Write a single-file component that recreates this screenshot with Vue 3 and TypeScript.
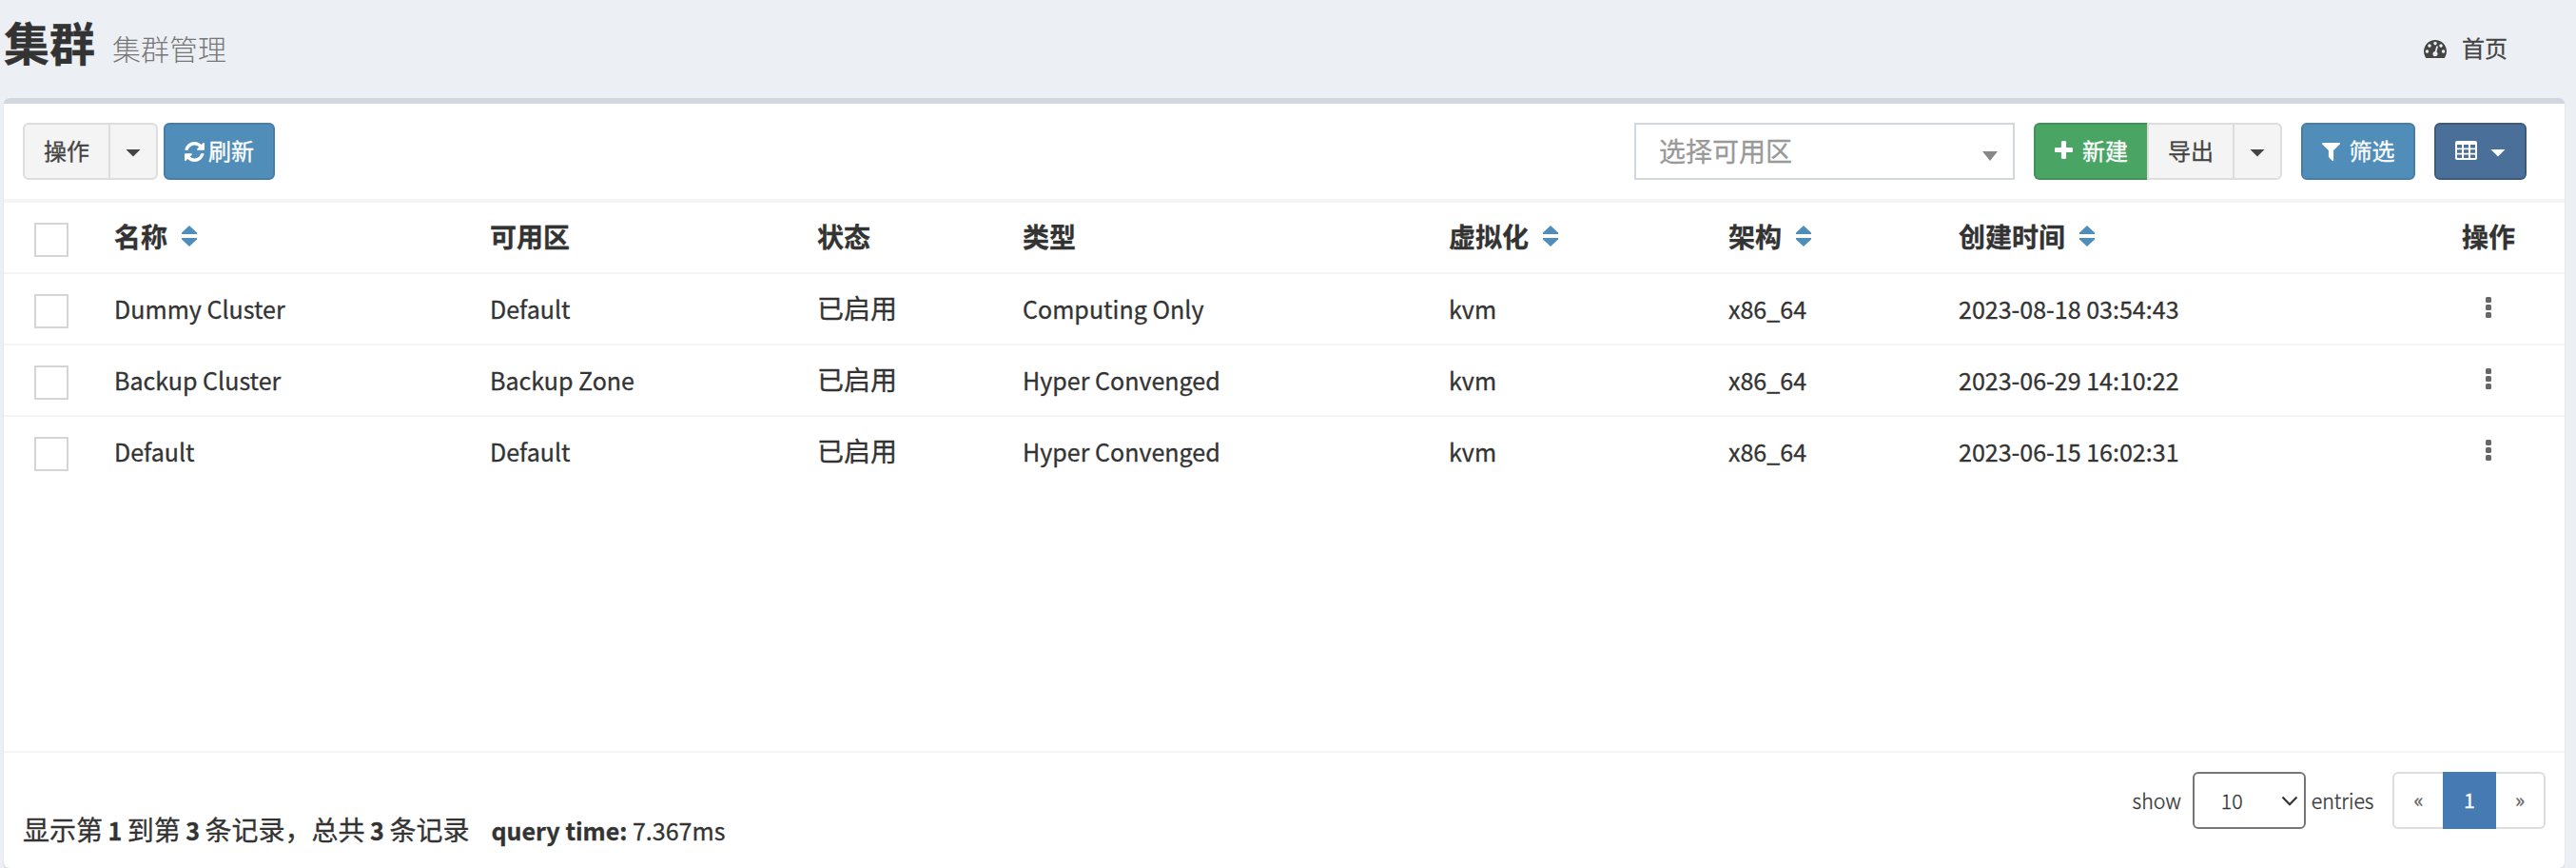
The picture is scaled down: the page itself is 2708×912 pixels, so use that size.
<script setup lang="ts">
interface Column {
  label: string
  sortable: boolean
}

interface Cluster {
  name: string
  zone: string
  status: string
  kind: string
  virt: string
  arch: string
  created: string
}

const columns: Column[] = [
  { label: '名称', sortable: true },
  { label: '可用区', sortable: false },
  { label: '状态', sortable: false },
  { label: '类型', sortable: false },
  { label: '虚拟化', sortable: true },
  { label: '架构', sortable: true },
  { label: '创建时间', sortable: true },
  { label: '操作', sortable: false },
]

const clusters: Cluster[] = [
  { name: 'Dummy Cluster', zone: 'Default', status: '已启用', kind: 'Computing Only', virt: 'kvm', arch: 'x86_64', created: '2023-08-18 03:54:43' },
  { name: 'Backup Cluster', zone: 'Backup Zone', status: '已启用', kind: 'Hyper Convenged', virt: 'kvm', arch: 'x86_64', created: '2023-06-29 14:10:22' },
  { name: 'Default', zone: 'Default', status: '已启用', kind: 'Hyper Convenged', virt: 'kvm', arch: 'x86_64', created: '2023-06-15 16:02:31' },
]
</script>

<template>
  <div class="page">
    <header class="content-header">
      <h1>集群</h1>
      <small class="subtitle">集群管理</small>
      <nav class="crumb">
        <svg class="dash" viewBox="0 256 1792 1408"><path d="M384 1152q0-53-37.5-90.5t-90.5-37.5-90.5 37.5-37.5 90.5 37.5 90.5 90.5 37.5 90.5-37.5 37.5-90.5zm192-448q0-53-37.5-90.5t-90.5-37.5-90.5 37.5-37.5 90.5 37.5 90.5 90.5 37.5 90.5-37.5 37.5-90.5zm428 481l101-382q6-26-7.5-48.5t-38.5-29.5-48 6.5-30 39.5l-101 382q-60 5-107 43.5t-63 98.5q-20 77 20 146t117 89 146-20 89-117q16-60-6-117t-72-91zm660-33q0-53-37.5-90.5t-90.5-37.5-90.5 37.5-37.5 90.5 37.5 90.5 90.5 37.5 90.5-37.5 37.5-90.5zm-640-640q0-53-37.5-90.5t-90.5-37.5-90.5 37.5-37.5 90.5 37.5 90.5 90.5 37.5 90.5-37.5 37.5-90.5zm448 192q0-53-37.5-90.5t-90.5-37.5-90.5 37.5-37.5 90.5 37.5 90.5 90.5 37.5 90.5-37.5 37.5-90.5zm320 448q0 261-141 483-19 29-54 29h-1402q-35 0-54-29-141-221-141-483 0-182 71-348t191-286 286-191 348-71 348 71 286 191 191 286 71 348z" /></svg>
        <span>首页</span>
      </nav>
    </header>

    <main class="box">
      <div class="toolbar">
        <div class="group">
          <button class="btn gray first w-action"><span>操作</span></button>
          <button class="btn gray last w-caret"><i class="caret"></i></button>
        </div>
        <button class="btn blue refresh">
          <svg class="ic-refresh" viewBox="0 0 1536 1536"><path d="M1511 928q0 5-1 7-64 268-268 434.5t-478 166.5q-146 0-282.5-55t-243.5-157l-129 129q-19 19-45 19t-45-19-19-45v-448q0-26 19-45t45-19h448q26 0 45 19t19 45-19 45l-137 137q71 66 161 102t187 36q134 0 250-65t186-179q11-17 53-117 8-23 30-23h192q13 0 22.5 9.5t9.5 22.5zm25-800v448q0 26-19 45t-45 19h-448q-26 0-45-19t-19-45 19-45l138-138q-148-137-349-137-134 0-250 65t-186 179q-11 17-53 117-8 23-30 23h-199q-13 0-22.5-9.5t-9.5-22.5v-7q65-268 270-434.5t480-166.5q146 0 284 55.5t245 156.5l130-129q19-19 45-19t45 19 19 45z" /></svg>
          <span>刷新</span>
        </button>

        <div class="zone-select">
          <span>选择可用区</span>
          <i class="caret zone-caret"></i>
        </div>
        <div class="group create-group">
          <button class="btn green first w-create">
            <svg class="ic-plus" viewBox="0 -192 1408 1408"><path d="M1408 416v192q0 40-28 68t-68 28h-416v416q0 40-28 68t-68 28h-192q-40 0-68-28t-28-68v-416h-416q-40 0-68-28t-28-68v-192q0-40 28-68t68-28h416v-416q0-40 28-68t68-28h192q40 0 68 28t28 68v416h416q40 0 68 28t28 68z" /></svg>
            <span>新建</span>
          </button>
          <button class="btn gray mid w-export"><span>导出</span></button>
          <button class="btn gray last w-caret">
            <i class="caret"></i>
          </button>
        </div>
        <button class="btn blue filter">
          <svg class="ic-filter" viewBox="0 0 1408 1408"><path d="M1403 39q17 41-14 70l-493 493v742q0 42-39 59-13 5-25 5-27 0-45-19l-256-256q-19-19-19-45v-486l-493-493q-31-29-14-70 17-39 59-39h1280q42 0 59 39z" /></svg>
          <span>筛选</span>
        </button>
        <button class="btn navy columns">
          <svg class="ic-grid" viewBox="0 0 23 20"><path fill-rule="evenodd" d="M2 0h19a2 2 0 0 1 2 2v16a2 2 0 0 1-2 2H2a2 2 0 0 1-2-2V2a2 2 0 0 1 2-2zM2 4v3.5h5V4zM9 4v3.5h5V4zM16 4v3.5h5V4zM2 9.2v3.5h5V9.200zM9 9.2v3.5h5V9.200zM16 9.2v3.5h5V9.200zM2 14.400v3.600h5v-3.600zM9 14.400v3.600h5v-3.600zM16 14.400v3.600h5v-3.600z" /></svg>
          <i class="caret"></i>
        </button>
      </div>

      <div class="table-wrap">
        <table>
          <colgroup>
            <col class="c-check" /><col class="c-name" /><col class="c-zone" /><col class="c-status" />
            <col class="c-kind" /><col class="c-virt" /><col class="c-arch" /><col class="c-time" /><col class="c-ops" />
          </colgroup>
          <thead>
            <tr>
              <th class="check"><i class="checkbox"></i></th>
              <th v-for="col in columns" :key="col.label">
                <span class="head">
                  {{ col.label }}
                  <svg v-if="col.sortable" class="sort" viewBox="0 0 16 22"><path d="M8 0 16 7.600V9H0V7.600zM0 13h16v1.400L8 22 0 14.400z" /></svg>
                </span>
              </th>
            </tr>
          </thead>
          <tbody>
            <tr v-for="row in clusters" :key="row.name">
              <td class="check"><i class="checkbox"></i></td>
              <td><span class="lat">{{ row.name }}</span></td>
              <td><span class="lat">{{ row.zone }}</span></td>
              <td>{{ row.status }}</td>
              <td><span class="lat">{{ row.kind }}</span></td>
              <td><span class="lat">{{ row.virt }}</span></td>
              <td><span class="lat">{{ row.arch }}</span></td>
              <td><span class="lat">{{ row.created }}</span></td>
              <td class="ops">
                <svg class="dots" viewBox="0 0 6 22"><rect width="6" height="6" rx="1.5" /><rect y="8" width="6" height="6" rx="1.5" /><rect y="16" width="6" height="6" rx="1.5" /></svg>
              </td>
            </tr>
          </tbody>
        </table>
      </div>

      <footer class="foot">
        <p class="summary">显示第<b>1</b>到第<b>3</b>条记录，总共<b>3</b>条记录<b class="query">query time:</b><span class="lat">7.367ms</span></p>
        <div class="pager">
          <span class="word">show</span>
          <div class="size-select">
            <span>10</span>
            <svg class="chev" viewBox="0 0 18 11"><path d="M1.5 1.5 9 9.2l7.5-7.7" /></svg>
          </div>
          <span class="word">entries</span>
          <div class="pages">
            <a class="prev">«</a><a class="current">1</a><a class="next">»</a>
          </div>
        </div>
      </footer>
    </main>
  </div>
</template>

<style>
body {
  margin: 0;
  background: #ecf0f5;
}
</style>

<style scoped>
* {
  box-sizing: border-box;
}
.page {
  height: 912px;
  padding: 0 12px 0 4px;
  overflow: hidden;
  background: #ecf0f5;
  color: #333;
  font-family: "Noto Sans CJK SC", "Open Sans", sans-serif;
  font-size: 28px;
  -webkit-text-stroke: 0.3px currentColor;
}
.content-header {
  display: flex;
  align-items: flex-start;
  height: 103px;
}
h1 {
  margin: 8px 0 0;
  font-size: 48px;
  line-height: 70px;
  font-weight: 700;
}
.subtitle {
  margin: 28px 0 0 18px;
  font-size: 30px;
  line-height: 44px;
  font-weight: 300;
  color: #777;
  -webkit-text-stroke: 0;
}
.crumb {
  display: flex;
  align-items: center;
  gap: 16px;
  height: 36px;
  margin: 32px 60px 0 auto;
  font-size: 24px;
  line-height: 36px;
  color: #444;
}
.dash {
  width: 24px;
  height: 19px;
  margin-top: 2px;
  fill: #444;
}
.box {
  display: flex;
  flex-direction: column;
  height: 809px;
  border-top: 6px solid #d2d6de;
  border-radius: 6px;
  background: #fff;
  box-shadow: 0 2px 2px rgba(0, 0, 0, 0.1);
}
.toolbar {
  display: flex;
  height: 104px;
  padding: 20px 40px 20px 20px;
  border-bottom: 4px solid #f4f4f4;
}
.group {
  display: flex;
}
.btn {
  display: flex;
  align-items: center;
  justify-content: center;
  height: 60px;
  padding: 0;
  border: 2px solid;
  border-radius: 6px;
  font-family: inherit;
  font-size: 24px;
  line-height: 36px;
}
.btn span {
  display: block;
  margin-top: -3px;
}
.btn svg {
  fill: #fff;
}
.gray {
  background: #f4f4f4;
  border-color: #ddd;
  color: #444;
}
.blue {
  background: #508db9;
  border-color: #487ea6;
  color: #fff;
}
.green {
  background: #4aa564;
  border-color: #43915a;
  color: #fff;
}
.navy {
  background: #4a7099;
  border-color: #3b5a7c;
  color: #fff;
}
.first {
  border-top-right-radius: 0;
  border-bottom-right-radius: 0;
}
.mid {
  border-radius: 0;
}
.last {
  margin-left: -2px;
  border-top-left-radius: 0;
  border-bottom-left-radius: 0;
}
.w-action {
  width: 92px;
}
.w-caret {
  width: 52px;
}
.w-create {
  width: 119px;
  gap: 10px;
  border-right: 0;
}
.w-export {
  width: 92px;
}
.caret {
  width: 16px;
  height: 8px;
  margin-top: 3px;
  background: currentColor;
  clip-path: polygon(0 0, 100% 0, 50% 100%);
}
.refresh {
  width: 117px;
  margin-left: 6px;
  gap: 4px;
}
.ic-refresh {
  width: 21px;
  height: 21px;
}
.ic-plus {
  width: 19px;
  height: 19px;
  margin-top: -3px;
}
.ic-filter {
  width: 19px;
  height: 19px;
}
.ic-grid {
  width: 23px;
  height: 20px;
  margin-top: -2px;
}
.zone-select {
  display: flex;
  align-items: center;
  justify-content: space-between;
  width: 400px;
  height: 60px;
  margin-left: auto;
  padding: 0 16px 0 24px;
  border: 2px solid #d2d6de;
  color: #999;
}
.zone-select span {
  margin-top: -3px;
}
.zone-caret {
  height: 10px;
  margin-top: 10px;
  background: #888;
}
.create-group {
  margin-left: 20px;
}
.filter {
  width: 120px;
  margin-left: 20px;
  gap: 10px;
}
.columns {
  width: 97px;
  margin-left: 20px;
  gap: 14px;
}
.table-wrap {
  flex: 1;
}
table {
  width: 2692px;
  table-layout: fixed;
  border-collapse: separate;
  border-spacing: 0;
}
.c-check { width: 100px; }
.c-name { width: 395px; }
.c-zone { width: 344px; }
.c-status { width: 216px; }
.c-kind { width: 448px; }
.c-virt { width: 294px; }
.c-arch { width: 242px; }
.c-time { width: 529px; }
.c-ops { width: 124px; }
th,
td {
  height: 75px;
  padding: 0 0 3px 16px;
  border-top: 2px solid #f4f4f4;
  text-align: left;
  vertical-align: middle;
  line-height: 40px;
  white-space: nowrap;
}
th {
  height: 73px;
  border-top: 0;
  font-weight: 700;
}
.check {
  padding: 0 0 0 32px;
}
.checkbox {
  display: block;
  width: 36px;
  height: 36px;
  margin-top: 5px;
  border: 2px solid #d5d5d5;
  background: #fff;
}
.head {
  display: flex;
  align-items: center;
  gap: 15px;
}
.sort {
  width: 16px;
  height: 22px;
  fill: #508db9;
}
.lat {
  font-size: 25.05px;
}
.ops {
  padding-left: 41px;
}
.dots {
  display: block;
  width: 6px;
  height: 22px;
  fill: #666;
}
.foot {
  display: flex;
  justify-content: space-between;
  height: 123px;
  border-top: 2px solid #f4f4f4;
}
.summary {
  margin: 59px 0 0 20px;
  line-height: 42px;
}
.summary b {
  margin: 0 5.5px;
  font-size: 25.05px;
}
.summary .query {
  margin-left: 23px;
}
.pager {
  display: flex;
  align-items: center;
  height: 60px;
  margin: 20px 20px 0 0;
  font-size: 21.3px;
  font-weight: 300;
}
.word,
.size-select span {
  margin-top: -2px;
}
.size-select {
  display: flex;
  align-items: center;
  justify-content: space-between;
  width: 119px;
  height: 60px;
  margin: 0 6px 0 12px;
  padding: 0 6px 0 28px;
  border: 2px solid #767676;
  border-radius: 6px;
}
.chev {
  width: 18px;
  height: 11px;
  fill: none;
  stroke: #333;
  stroke-width: 2.2;
}
.pages {
  display: flex;
  margin-left: 19.500px;
  line-height: 54px;
  font-weight: 400;
  text-align: center;
  color: #666;
}
.pages a {
  height: 60px;
  border: 2px solid #ddd;
}
.pages .prev {
  width: 53px;
  border-right: 0;
  border-radius: 6px 0 0 6px;
}
.pages .current {
  width: 56px;
  border-color: #457ab3;
  background: #457ab3;
  color: #fff;
}
.pages .next {
  width: 52px;
  border-left: 0;
  border-radius: 0 6px 6px 0;
}
</style>
